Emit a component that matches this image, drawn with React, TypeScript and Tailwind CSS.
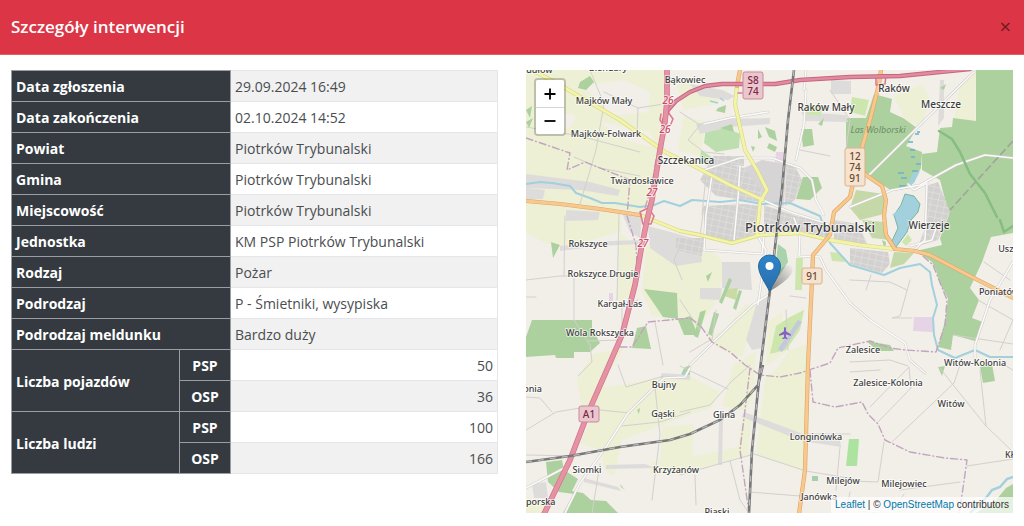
type Row = { label: string; value: string };
type Shape = { fill: string; d: string };
type Place = { x: number; y: number; name: string; size?: number };

const details: Row[] = [
  { label: "Data zgłoszenia", value: "29.09.2024 16:49" },
  { label: "Data zakończenia", value: "02.10.2024 14:52" },
  { label: "Powiat", value: "Piotrków Trybunalski" },
  { label: "Gmina", value: "Piotrków Trybunalski" },
  { label: "Miejscowość", value: "Piotrków Trybunalski" },
  { label: "Jednostka", value: "KM PSP Piotrków Trybunalski" },
  { label: "Rodzaj", value: "Pożar" },
  { label: "Podrodzaj", value: "P - Śmietniki, wysypiska" },
  { label: "Podrodzaj meldunku", value: "Bardzo duży" },
];

const counts = [
  { label: "Liczba pojazdów", psp: 50, osp: 36 },
  { label: "Liczba ludzi", psp: 100, osp: 166 },
];

const FARM = "#edf0d4";
const FOREST = "#add19e";
const TOWN = "#dddcdb";
const GRASS = "#cde6ae";
const WATER = "#a2d0dc";
const SAND = "#f2efe9";

const areas: Shape[] = [
  // farmland
  { fill: FARM, d: "M526 70H668L664 118 655 165 648 212 600 208 526 200Z" },
  { fill: FARM, d: "M526 202 620 212 622 231 568 247 546 243 526 233Z" },
  { fill: FARM, d: "M620 232 636 248 637 292 617 302Z" },
  { fill: FARM, d: "M646 244 692 262 690 319 652 316 642 292Z" },
  { fill: FARM, d: "M592 354 624 348 609 372 599 408 582 408 577 380Z" },
  { fill: FARM, d: "M604 388 664 377 690 376 720 392 712 407 622 440 614 476 604 470 601 450 580 444Z" },
  { fill: FARM, d: "M662 427 694 424 692 466 660 466Z" },
  { fill: FARM, d: "M733 365 756 352 753 398 745 411 722 406Z" },
  { fill: FARM, d: "M766 374 806 370 804 472 756 454Z" },
  { fill: FARM, d: "M742 417 751 420 748 455 684 474 650 474 652 462 700 455 738 447Z" },
  { fill: FARM, d: "M680 262 712 250 726 266 714 306 696 330 680 318Z" },
  { fill: FARM, d: "M724 330 746 304 756 306 742 358 722 350 708 338Z" },
  { fill: FARM, d: "M676 80 704 88 728 90 716 104 684 110Z" },
  { fill: FARM, d: "M768 322 782 312 786 352 766 366Z" },
  { fill: FARM, d: "M894 96 922 84 930 100 922 126 906 122Z" },
  { fill: FARM, d: "M960 84 976 72 975 121 954 119Z" },
  { fill: FARM, d: "M684 116 706 122 700 156 678 150Z" },
  { fill: FARM, d: "M790 350 806 344 806 372 772 374Z" },
  { fill: FARM, d: "M526 498 546 504 544 513H526Z" },
  // clearings in the farmland
  { fill: SAND, d: "M584 86 624 80 650 92 648 112 612 116Z" },
  { fill: SAND, d: "M600 122 650 132 656 148 624 140Z" },
  { fill: SAND, d: "M540 106 576 116 570 128 536 122Z" },
  // forests
  { fill: FOREST, d: "M874 94 892 99 890 112 903 118 917 128 906 146 922 152 921 168 910 188 892 191 872 178 846 168 846 118 866 118Z" },
  { fill: FOREST, d: "M976 70H1013V233L991 237 982 262 970 288 979 300 972 318 983 322 975 341 953 335 951 350 938 347 945 321 948 299 940 278 932 262 916 251 942 245 940 238 949 215 940 180 922 170 922 154 937 152 940 128 952 127 953 118 976 121Z" },
  { fill: FOREST, d: "M532 320H592V328L600 343 590 352H574V358H556L555 355 526 357V337Z" },
  { fill: FOREST, d: "M644 289 677 293 678 319 663 317Z" },
  { fill: FOREST, d: "M637 328 646 326 651 349 632 348Z" },
  { fill: FOREST, d: "M546 462 562 460 564 470 578 479 572 491 583 493 591 500 606 501 618 513H563L574 494 559 492 548 482Z" },
  { fill: FOREST, d: "M678 320 690 316 698 335 684 335Z" },
  { fill: FOREST, d: "M801 129 812 129 814 145 803 147Z" },
  { fill: FOREST, d: "M803 177 818 177 822 188 810 200 796 199Z" },
  { fill: FOREST, d: "M765 127 775 131 777 141 769 137Z" },
  { fill: FOREST, d: "M769 143 777 147 775 152 767 148Z" },
  { fill: FOREST, d: "M758 129 762 137 758 139Z" },
  { fill: FOREST, d: "M551 242 560 245 553 258Z" },
  { fill: FOREST, d: "M580 82 590 76 594 82 586 90 578 88Z" },
  { fill: FOREST, d: "M718 108 726 105 725 113 716 111Z" },
  { fill: FOREST, d: "M866 341 890 345 894 351 878 351Z" },
  { fill: FOREST, d: "M938 367 945 366 942 376Z" },
  { fill: FOREST, d: "M980 367 992 364 995 381 983 383Z" },
  { fill: FOREST, d: "M1013 484 1006 488 996 500 976 513H1013Z" },
  { fill: FOREST, d: "M684 368 690 365 690 376 680 377Z" },
  { fill: "#a6cfae", d: "M812 476H818V481H812Z" },
  { fill: "#ace3a0", d: "M849 439H859L857 466H846Z" },
  { fill: "#bddfaf", d: "M706 127 722 126 740 134 739 148 716 152 704 143Z" },
  { fill: "#bddfaf", d: "M701 150 713 158 710 166 700 162Z" },
  { fill: "#a9d2ad", d: "M778 244 786 250 788 262 779 276 775 270Z" },
  // town fabric
  { fill: TOWN, d: "M526 174 590 182 620 190 618 196 580 190 526 188Z" },
  { fill: TOWN, d: "M526 188 545 190 543 199 526 200Z" },
  { fill: TOWN, d: "M566 210 600 212 598 220 566 221Z" },
  { fill: TOWN, d: "M560 246 612 241 640 240 640 244 600 246 560 251Z" },
  { fill: TOWN, d: "M622 213 642 216 640 238 630 232Z" },
  { fill: TOWN, d: "M648 226 700 240 702 262 676 266 650 248Z" },
  { fill: TOWN, d: "M722 262 750 262 752 290 722 288Z" },
  { fill: TOWN, d: "M700 288 722 288 720 300 700 299Z" },
  { fill: TOWN, d: "M757 302 768 296 762 348 752 350 746 340Z" },
  { fill: TOWN, d: "M831 80 851 81 851 94 831 94Z" },
  { fill: TOWN, d: "M696 124 722 119 770 118 770 124 730 127 700 134Z" },
  { fill: TOWN, d: "M690 84 722 90 735 96 728 100 700 96Z" },
  { fill: TOWN, d: "M801 112 846 115 848 122 806 121Z" },
  { fill: TOWN, d: "M940 80 944 80 944 118 938 126Z" },
  { fill: TOWN, d: "M744 412 806 435 840 440 841 447 802 441 742 417Z" },
  { fill: TOWN, d: "M719 420 723 420 722 465 718 465Z" },
  { fill: TOWN, d: "M606 465 645 464 655 468 606 469Z" },
  { fill: TOWN, d: "M584 478 618 487 621 491 584 482Z" },
  { fill: TOWN, d: "M532 484 546 482 548 498 534 498Z" },
  { fill: TOWN, d: "M662 373 690 375 690 380 660 378Z" },
  { fill: "#d6d4d4", d: "M744 168 762 160 786 164 784 206 764 202Z" },
  { fill: "#e6d6e4", d: "M776 152 784 152 784 164 775 162Z" },
  { fill: "#e6d3e6", d: "M914 317H933V332L913 331Z" },
  { fill: "#e6d3e6", d: "M609 293H613V301H609Z" },
  { fill: GRASS, d: "M804 104 824 106 820 116 804 114Z" },
  { fill: GRASS, d: "M852 97 869 100 865 116 850 112Z" },
  { fill: GRASS, d: "M790 317 804 310 800 330 786 350 770 354 776 326Z" },
  { fill: GRASS, d: "M830 252 840 253 846 262 832 261Z" },
  { fill: GRASS, d: "M796 258 803 258 802 290 795 290Z" },
  { fill: GRASS, d: "M908 234 912 240 906 246 902 242Z" },
  { fill: "#c5d8a8", d: "M856 190 884 194 884 214 860 220 850 208Z" },
  { fill: "#c5d8a8", d: "M894 252 914 253 904 264 890 268Z" },
  { fill: "#c5d8a8", d: "M862 220 884 222 890 240 872 238Z" },
  { fill: "#c9dba4", d: "M724 289 738 288 736 300 724 296Z" },
  { fill: "#c4c8dc", d: "M798 320 802 322 782 352 778 349Z" },
  { fill: "#96ddb8", d: "M680 238 687 238 688 247 680 246Z" },
];

const blocks = [
  "M711 160 744 168 764 192 760 202 716 196 700 180Z",
  "M704 206 744 204 760 206 758 236 734 242 704 236Z",
  "M786 164 794 164 802 180 795 200 785 206Z",
  "M764 205 796 216 830 224 830 240 800 232 764 234Z",
  "M834 220 858 224 868 246 834 240Z",
  "M850 248 888 252 890 264 882 273 850 264Z",
  "M926 186 938 182 950 212 938 240 918 246 926 226Z",
  "M676 238 704 238 702 256 676 250Z",
  "M705 162 714 156 744 156 744 166 716 164Z",
];

const smallGreens = [
  "M700 312 706 310 698 338 694 336Z",
  "M714 312 719 314 712 336 708 334Z",
  "M729 278 732 280 722 304 719 302Z",
  "M739 290 742 291 736 310 733 308Z",
  "M706 276 712 272 708 282Z",
  "M720 128 732 124 734 132Z",
  "M751 146 755 147 753 152Z",
  "M734 170 739 169 738 176Z",
  "M818 124 824 118 822 126Z",
  "M936 270 946 284 948 298 940 284Z",
  "M526 110 532 106 530 118Z",
  "M526 122 533 118 529 128Z",
  "M637 410 640 408 639 414Z",
  "M620 484 625 490 621 487Z",
  "M940 88 946 84 944 90Z",
  "M882 240 886 242 885 250Z",
];

const lanes = [
  "M590 70 604 104 596 150 580 204",
  "M526 127 580 136 640 152",
  "M604 92 638 108 637 136M638 108 664 104",
  "M574 157 600 168 640 176",
  "M565 216 564 276M526 280 560 276 640 277",
  "M574 278 574 320 590 345 592 362 578 376",
  "M619 214 617 300M526 297 536 297",
  "M638 300 622 308 622 330M588 341 620 340",
  "M680 246 674 260 682 280M655 322 663 365",
  "M526 430 556 412 580 408 630 413M526 397 540 398 552 412",
  "M618 365 626 387 664 376M622 426 660 422 690 412M655 387 660 435 652 500",
  "M526 455 580 456M600 464 592 513",
  "M680 112 700 125 688 140 704 152 724 154",
  "M706 176 702 215M704 206 700 236",
  "M680 412 710 405 732 381 750 365M680 366 728 389",
  "M680 475 754 454 806 471 860 480",
  "M695 475 696 505M730 461 740 500 749 513",
  "M749 492 800 496M806 434 850 434M840 447 836 490",
  "M830 90 850 120 846 150M800 150 830 156",
  "M850 280 890 282 907 290M910 280 900 316 892 318H912",
  "M871 275 866 290M850 372 880 370",
  "M850 362 890 360 908 366M870 407 909 367 911 388 878 422",
  "M892 442 954 383 960 365M940 368 954 386 986 426 1013 452",
  "M980 370 986 426M884 442 878 482 850 481",
  "M1013 459 967 466M900 490 960 482",
  "M953 335 1013 344M978 300 1013 320M980 286 1000 296",
  "M984 262 1010 280M1000 350 1013 320M1004 365 1013 370",
  "M850 492 846 513M904 494 900 500",
  "M680 300 700 330M690 352 710 340M716 310 712 340",
  "M786 310 788 350M790 296 806 298",
];

const whiteRoads = [
  "M704 170 740 158 772 158 800 168 812 180 816 200 824 215",
  "M712 175 706 215 704 250 762 254 764 235",
  "M740 166 738 198 734 240",
  "M757 235 766 250 758 305",
  "M770 294 754 304 730 326 690 365",
  "M763 200 790 212 828 224",
  "M794 218 800 234 799 256 820 257 826 270 850 303",
  "M850 303 870 320 905 343 910 360 925 373",
  "M850 207 892 190 920 185 956 165 985 155 1013 158",
  "M974 72 930 115 866 178 850 190",
  "M804 90 806 70M806 90 804 124 796 160",
  "M655 387 628 413 606 447 580 483 565 513",
  "M526 488 570 465M655 387 664 378 685 377 690 368",
  "M908 184 914 190 927 183 925 240 914 250",
  "M910 246 932 240 938 222",
  "M1013 262 990 300 975 345 975 358",
  "M860 510 880 512M704 124 730 118 768 112",
];

const boundaries = [
  "M526 138 570 153 567 170 585 162 630 180 627 216 636 245 637 265",
  "M656 160 652 185 645 208",
  "M620 347H632L648 322 690 318 700 325 712 342 730 352 745 365 760 375 780 377 800 373 830 363 838 348 870 341 890 348 905 350 936 352 945 325 947 300 933 265 916 250",
  "M810 370 813 402 835 407 862 402 868 414 878 424 885 440 910 452 945 458 967 460 962 495 959 513",
  "M750 368 745 410 740 450 749 513",
];

const river =
  "M526 184 540 182 552 183 570 186 576 193 590 198 602 203 615 203 640 207 654 205 664 201 680 206 692 200 720 202 740 200 762 204 790 203 806 210 820 216 830 243 850 265 884 275 900 268 920 264 930 272 932 285 937 305 933 318 934 335 938 350 955 358 975 350 990 357 1013 357";

const rails = [
  "M794 70 788 120 782 190 777 230 770 290 765 330 760 370 752 450 749 513",
  "M526 462 570 456 620 447 670 440 690 434 720 420 740 405 758 385 763 365",
];

const places: Place[] = [
  { x: 537, y: 73, name: "ydułów" },
  { x: 608, y: 71, name: "Bleńdary" },
  { x: 685, y: 83, name: "Bąkowiec" },
  { x: 604, y: 104, name: "Majków Mały" },
  { x: 606, y: 137, name: "Majków-Folwark" },
  { x: 686, y: 164, name: "Szczekanica", size: 10 },
  { x: 642, y: 184, name: "Twardosławice" },
  { x: 826, y: 111, name: "Raków Mały", size: 10 },
  { x: 894, y: 92, name: "Raków", size: 10 },
  { x: 941, y: 108, name: "Meszcze", size: 10 },
  { x: 588, y: 247, name: "Rokszyce" },
  { x: 603, y: 277, name: "Rokszyce Drugie" },
  { x: 620, y: 307, name: "Kargał-Las" },
  { x: 600, y: 336, name: "Wola Rokszycka" },
  { x: 810, y: 232, name: "Piotrków Trybunalski", size: 13 },
  { x: 929, y: 229, name: "Wierzeje", size: 10 },
  { x: 1008, y: 252, name: "Uszc" },
  { x: 999, y: 295, name: "Poniatów" },
  { x: 863, y: 353, name: "Zalesice" },
  { x: 975, y: 366, name: "Witów-Kolonia" },
  { x: 888, y: 386, name: "Zalesice-Kolonia" },
  { x: 951, y: 407, name: "Witów" },
  { x: 530, y: 392, name: "Żonia" },
  { x: 664, y: 388, name: "Bujny" },
  { x: 663, y: 417, name: "Gąski" },
  { x: 724, y: 418, name: "Glina" },
  { x: 816, y: 440, name: "Longinówka" },
  { x: 587, y: 473, name: "Siomki" },
  { x: 676, y: 473, name: "Krzyżanów" },
  { x: 843, y: 484, name: "Milejów" },
  { x: 904, y: 487, name: "Milejowiec" },
  { x: 1012, y: 458, name: "Kłu" },
  { x: 819, y: 500, name: "Janówka" },
  { x: 717, y: 515, name: "Piaski" },
  { x: 538, y: 505, name: "oporska" },
];

function Shield({ x, y, lines, pink }: { x: number; y: number; lines: string[]; pink?: boolean }) {
  const height = lines.length * 11 + 5;
  return (
    <g>
      <rect
        x={x - 10}
        y={y}
        width="20"
        height={height}
        rx="2"
        fill={pink ? "#eac6cf" : "#f6e3cf"}
        stroke={pink ? "#c98b99" : "#d9b18c"}
        strokeWidth="1"
      />
      {lines.map((line, i) => (
        <text
          key={line}
          x={x}
          y={y + 12 + i * 11}
          fontSize="10"
          fontWeight="500"
          textAnchor="middle"
          fill={pink ? "#7d2844" : "#6b4a32"}
        >
          {line}
        </text>
      ))}
    </g>
  );
}

function MapDrawing() {
  const motorway =
    "M667 70 667 100 665 122 660 150 652 200 647 220 641 250 635 285 622 335 609 365 588 413 570 460 544 514";
  const express =
    "M664 120 668 110 676 101 690 92 705 86 722 84 775 84 800 80 850 77 900 76 940 72 970 69";
  const primary = [
    "M881 70 879 84 870 120 857 165 866 175 882 186 886 200 884 215 886 235 895 249 915 251 930 255 970 276 1015 299",
    "M857 165 850 197 834 212 830 235 813 255 812 280 808 365 805 470 799 514",
    "M526 201 560 204 600 209 640 215",
    "M740 70 737 86",
  ];
  const secondary = [
    "M737 86 735 104 745 150 757 170 767 190 760 202 757 235",
    "M532 70 560 85 620 120 665 152 692 165 730 185 763 200",
    "M640 215 680 231 700 235 732 243 760 235 800 233 830 240 860 245 895 249",
  ];
  return (
    <svg
      viewBox="526 70 487 443"
      preserveAspectRatio="xMidYMid slice"
      className="block h-full w-full font-['Noto_Sans',sans-serif]"
      role="img"
      aria-label="Piotrków Trybunalski"
    >
      <defs>
        <pattern id="streets" width="7" height="6" patternUnits="userSpaceOnUse" patternTransform="rotate(12)">
          <rect width="7" height="6" fill="#d3d1d0" />
          <path d="M0 0H7M0 0V6" stroke="#e2e0de" strokeWidth="1.4" />
        </pattern>
        <linearGradient id="pin" x1="0" y1="0" x2="0" y2="1">
          <stop offset="0" stopColor="#2e85cb" />
          <stop offset="1" stopColor="#2a6da8" />
        </linearGradient>
        <linearGradient id="shadow" x1="0" y1="1" x2="1" y2="0">
          <stop offset="0" stopColor="#333" stopOpacity="0.6" />
          <stop offset="1" stopColor="#333" stopOpacity="0" />
        </linearGradient>
      </defs>
      <rect x="526" y="70" width="487" height="443" fill={SAND} />
      {areas.map((a) => (
        <path key={a.d} d={a.d} fill={a.fill} />
      ))}
      {smallGreens.map((d) => (
        <path key={d} d={d} fill={FOREST} />
      ))}
      {blocks.map((d) => (
        <path key={d} d={d} fill="url(#streets)" />
      ))}

      {/* water */}
      <path d="M905 194 914 196 920 204 918 212 911 220 907 232 896 247 891 243 898 228 894 215 901 205Z" fill={WATER} stroke="#79b5a4" />
      <path d="M892 215 902 207 898 216Z M907 187 912 174 920 171 914 183Z M682 372 688 371 686 377Z" fill={WATER} />
      <path d="M915 134h4M908 142h5M910 150h5M911 157h4M916 164h5M912 171h6M898 173h6M901 178h6M899 186h7M917 132h3" stroke="#63b4cf" strokeWidth="1.3" />
      <path d={river} fill="none" stroke={WATER} strokeWidth="2" strokeLinejoin="round" />
      <path d="M1013 477 1007 479 1000 487 992 490 986 498 970 513" fill="none" stroke={WATER} strokeWidth="2.5" />
      <path d="M710 101 718 103M720 98 724 101" stroke={WATER} strokeWidth="1.5" />

      <g fill="none" strokeLinejoin="round" strokeLinecap="round">
        {lanes.map((d) => (
          <path key={d} d={d} stroke="#d3d0ce" strokeWidth="1" />
        ))}
        {whiteRoads.map((d) => (
          <path key={d} d={d} stroke="#cfcdcc" strokeWidth="2.6" />
        ))}
        {whiteRoads.map((d) => (
          <path key={d} d={d} stroke="#fbfaf8" strokeWidth="1.6" />
        ))}
        <path d="M939 131 952 139 960 152 970 174 985 193 997 217M1000 220 1004 232 1013 226" stroke="#86bd80" strokeWidth="2.5" />
        {boundaries.map((d) => (
          <path key={d} d={d} stroke="#c3a4bf" strokeWidth="1.4" strokeDasharray="7 3 1 3" />
        ))}
        {secondary.map((d) => (
          <path key={d} d={d} stroke="#d5d68b" strokeWidth="4" />
        ))}
        {secondary.map((d) => (
          <path key={d} d={d} stroke="#f3f4a6" strokeWidth="2.8" />
        ))}
        {primary.map((d) => (
          <path key={d} d={d} stroke="#dda668" strokeWidth="4.2" />
        ))}
        {primary.map((d) => (
          <path key={d} d={d} stroke="#f8c88c" strokeWidth="3" />
        ))}
        <path d="M661 114 660 120 664 126 670 126 673 119 668 112M640 212 648 208 654 216 651 224 643 224ZM876 76 886 75 885 84 876 85ZM738 93 742 93" stroke="#dc7c92" strokeWidth="1.6" />
        <path d={express} stroke="#c9647f" strokeWidth="4.4" />
        <path d={express} stroke="#df8ca0" strokeWidth="2.4" />
        <path d={motorway} stroke="#d4708a" strokeWidth="5.6" />
        <path d={motorway} stroke="#e592a4" strokeWidth="4.2" />
      </g>

      <g fill="none">
        {rails.map((d) => (
          <path key={d} d={d} stroke="#777" strokeWidth="2.6" />
        ))}
        {rails.map((d) => (
          <path key={d} d={d} stroke="#bbb" strokeWidth="1.2" strokeDasharray="6 6" />
        ))}
        <path d="M1013 141 950 210" stroke="#a0a39d" strokeWidth="1.6" strokeDasharray="8 3" />
      </g>

      <Shield x={753} y={72} lines={["S8", "74"]} pink />
      <Shield x={855} y={148} lines={["12", "74", "91"]} />
      <Shield x={812} y={268} lines={["91"]} />
      <Shield x={589} y={406} lines={["A1"]} pink />

      {/* airfield */}
      <path
        d="M785 327c.7 0 1 .8 1 1.800v2.400l5 3.200v1.400l-5-1.400v2.600l1.600 1.200v1l-2.600-.7-2.600.7v-1l1.600-1.200v-2.600l-5 1.400v-1.400l5-3.200v-2.400c0-1 .3-1.800 1-1.800Z"
        fill="#8461c4"
      />

      <g fontSize="10" fontWeight="500" fontStyle="italic" fill="#c94b5f" stroke="#fff" strokeWidth="2" strokeOpacity="0.7" paintOrder="stroke" textAnchor="middle">
        <text x="668" y="104">26</text>
        <text x="665" y="133">26</text>
        <text x="652" y="196">27</text>
        <text x="643" y="247">27</text>
      </g>
      <text x="878" y="133" fontSize="9" fontStyle="italic" fill="#6f8c68" textAnchor="middle">
        Las Wolborski
      </text>
      <g fill="#3d3d3d" stroke="#fff" strokeOpacity="0.65" strokeWidth="2" strokeLinejoin="round" paintOrder="stroke" textAnchor="middle">
        {places.map((p) => (
          <text key={p.name} x={p.x} y={p.y} fontSize={p.size ?? 9} fontWeight={500}>
            {p.name}
          </text>
        ))}
      </g>

      {/* marker with its slanted shadow */}
      <path d="M770 291 775 277C778 268 789 262 792 267 795 273 786 282 770 291Z" fill="url(#shadow)" />
      <path
        d="M769.500 291.500C767 285 758.500 275 758.500 266A11 11 0 0 1 780.500 266C780.500 275 772 285 769.500 291.500Z"
        fill="url(#pin)"
        stroke="#2568a0"
        strokeWidth="1"
      />
      <circle cx="769.500" cy="266" r="4" fill="#fff" />
    </svg>
  );
}

function InterventionMap() {
  return (
    <div className="relative h-[443px] overflow-hidden bg-gray-200">
      <MapDrawing />
      <div className="absolute left-2 top-2 flex flex-col rounded border-2 border-black/20 bg-clip-padding text-black">
        <button type="button" aria-label="Powiększ" className="flex h-7 w-7 items-center justify-center rounded-t-xs border-b border-gray-300 bg-white">
          <svg viewBox="0 0 12 12" className="h-3 w-3" stroke="currentColor" strokeWidth="1.8">
            <path d="M0.500 6H11.500M6 0.500V11.500" />
          </svg>
        </button>
        <button type="button" aria-label="Pomniejsz" className="flex h-[26px] w-7 items-center justify-center rounded-b-xs bg-white">
          <svg viewBox="0 0 12 12" className="h-3 w-3" stroke="currentColor" strokeWidth="1.8">
            <path d="M0.500 6H11.500" />
          </svg>
        </button>
      </div>
      <div className="absolute bottom-0 right-0 bg-white/70 px-1 font-['Liberation_Sans',sans-serif] text-[10px] leading-4 text-[#333]">
        <a href="https://leafletjs.com" className="text-[#0078a8]">Leaflet</a> | ©{" "}
        <a href="https://www.openstreetmap.org/copyright" className="text-[#0078a8]">OpenStreetMap</a> contributors
      </div>
    </div>
  );
}

const headCell = "border border-[#9a9ea2] bg-[#343a40] px-1 pt-[5px] pb-[3px] font-bold text-white";
const dataCell = "border border-[#e4e6e9] px-1 pt-[5px] pb-[3px]";

export default function App() {
  return (
    <div className="min-h-screen bg-white font-['Open_Sans',sans-serif] text-[#4a4d50]">
      <header className="flex h-[55px] items-center justify-between border-b border-[#e0606c] bg-[#dc3545] px-[11px]">
        <h5 className="text-[17px] font-semibold text-white">Szczegóły interwencji</h5>
        <button type="button" aria-label="Zamknij" className="px-0.5 text-xl leading-none text-[#6e1a22]">
          ×
        </button>
      </header>

      <main className="grid grid-cols-2 items-start gap-7 px-[11px] pt-[15px]">
        <table className="w-full table-fixed border-collapse text-[14px] leading-[22px]">
          <colgroup>
            <col className="w-[168px]" />
            <col className="w-[51px]" />
            <col />
          </colgroup>
          <tbody>
            {details.map((row) => (
              <tr key={row.label} className="odd:bg-[#f1f1f1]">
                <th scope="row" colSpan={2} className={`${headCell} text-left`}>
                  {row.label}
                </th>
                <td className={dataCell}>{row.value}</td>
              </tr>
            ))}
          </tbody>
          {counts.map((c) => (
            <tbody key={c.label}>
              <tr>
                <th scope="rowgroup" rowSpan={2} className={`${headCell} text-left`}>
                  {c.label}
                </th>
                <th scope="row" className={`${headCell} text-center`}>PSP</th>
                <td className={`${dataCell} text-right`}>{c.psp}</td>
              </tr>
              <tr className="bg-[#f1f1f1]">
                <th scope="row" className={`${headCell} text-center`}>OSP</th>
                <td className={`${dataCell} text-right`}>{c.osp}</td>
              </tr>
            </tbody>
          ))}
        </table>
        <InterventionMap />
      </main>
    </div>
  );
}
